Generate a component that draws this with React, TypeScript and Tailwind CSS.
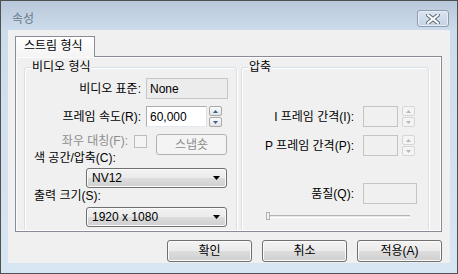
import React from "react";

const font = "font-['Liberation_Sans','Noto_Sans_CJK_KR',sans-serif]";

const btnBg =
  "bg-[linear-gradient(#f2f2f2,#ebebeb_50%,#dddddd_50%,#cfcfcf)] border border-[#707070] rounded-[3px] shadow-[inset_0_0_0_1px_#fbfbfb]";

const Arrow = ({ up, color }: { up?: boolean; color: string }) => (
  <svg width="5" height="3" viewBox="0 0 5 3">
    <path d={up ? "M2.5 0L5 3H0Z" : "M0 0H5L2.5 3Z"} fill={color} />
  </svg>
);

const Spinner = ({ disabled }: { disabled?: boolean }) => {
  const box = disabled
    ? "border-[#d6d6d6] bg-[#f4f4f4]"
    : "border-[#a9a9a9] bg-[linear-gradient(#fafafa,#e4e4e4)]";
  const c = disabled ? "#b8b8b8" : "#3b5d96";
  return (
    <div className="flex flex-col gap-[1px]">
      <div className={`w-[13px] h-[10px] border rounded-[2px] flex items-center justify-center ${box}`}>
        <Arrow up color={c} />
      </div>
      <div className={`w-[13px] h-[10px] border rounded-[2px] flex items-center justify-center ${box}`}>
        <Arrow color={c} />
      </div>
    </div>
  );
};

const Combo = ({ text }: { text: string }) => (
  <div className={`w-[141px] h-[20px] flex items-center pl-[5px] pr-[6px] ${btnBg}`}>
    <span className="flex-1 leading-[14px]">{text}</span>
    <svg width="7" height="4" viewBox="0 0 7 4">
      <path d="M0 0H7L3.5 4Z" fill="#000" />
    </svg>
  </div>
);

const Button = ({ label }: { label: string }) => (
  <div className={`w-[85px] h-[22px] flex items-center justify-center leading-[14px] ${btnBg}`}>
    {label}
  </div>
);

const GroupBox = ({
  title,
  className,
  children,
}: {
  title: string;
  className: string;
  children: React.ReactNode;
}) => (
  <div
    className={`relative h-[190px] border border-[#d5dfe5] rounded-[3px] shadow-[inset_1px_1px_0_#ffffff,1px_1px_0_#ffffff] ${className}`}
  >
    <span className="absolute left-[6px] -top-[8px] px-[1px] bg-[#f0f0f0] leading-[14px]">
      {title}
    </span>
    {children}
  </div>
);

const Field = ({ w, children, disabled, readOnly }: { w: string; children?: React.ReactNode; disabled?: boolean; readOnly?: boolean }) => (
  <div
    className={`${w} h-[21px] border flex items-center pl-[3px] leading-[14px] ${
      disabled
        ? "bg-[#f0f0f0] border-[#c4c4c4]"
        : readOnly
        ? "bg-[#ececec] border-[#c6c6c6]"
        : "bg-white border-[#abadb3] border-b-[#e3e9ef] border-r-[#dbdfe6]"
    }`}
  >
    {children}
  </div>
);

export default function App() {
  return (
    <div
      className={`w-[458px] h-[274px] border border-[#505050] bg-[linear-gradient(#b8c8da,#cddcec_30px,#d8e5f2)] flex flex-col text-[12px] text-black ${font}`}
    >
      {/* title bar */}
      <div className="h-[29px] flex items-start">
        <span className="ml-[11px] mt-[11px] leading-[14px] text-[#6a7a8c]">속성</span>
        <div className="ml-auto mr-[8px] mt-[9px] w-[32px] h-[17px] rounded-[3px] border border-[#8d9cae] bg-[linear-gradient(#d9e4f0,#c4d3e4)] shadow-[inset_0_0_0_1px_#e8eef6] flex items-center justify-center">
          <svg width="14" height="10" viewBox="0 0 14 10">
            <path d="M2 1L12 9M12 1L2 9" stroke="#5f6b78" strokeWidth="4" strokeLinecap="square" />
            <path d="M2 1L12 9M12 1L2 9" stroke="#ffffff" strokeWidth="2" strokeLinecap="square" />
          </svg>
        </div>
      </div>

      {/* client area */}
      <div className="mx-[7px] h-[233px] bg-[#f0f0f0] flex flex-col">
        <div className="mt-[6px] ml-[7px] relative z-10 w-[80px] h-[21px] border border-b-0 border-[#898c95] bg-[linear-gradient(#ffffff,#f4f4f4)] pl-[8px] pt-[2px] leading-[14px]">
          스트림 형식
        </div>
        <div className="-mt-[1px] ml-[7px] w-[427px] h-[176px] border border-[#898c95] bg-[#f0f0f0]">
          <div className="h-full border border-[#fdfdfd] overflow-hidden flex gap-[4px] pl-[7px] pt-[9px]">
            <GroupBox title="비디오 형식" className="w-[213px]">
              <div className="flex flex-col pt-[10px]">
                <div className="flex items-center">
                  <span className="w-[116px] text-right leading-[14px]">비디오 표준:</span>
                  <div className="ml-[5px]">
                    <Field w="w-[82px]" readOnly>None</Field>
                  </div>
                </div>
                <div className="flex items-center mt-[7px]">
                  <span className="w-[116px] text-right leading-[14px]">프레임 속도(R):</span>
                  <div className="ml-[5px]">
                    <Field w="w-[61px]">60,000</Field>
                  </div>
                  <div className="ml-[2px]">
                    <Spinner />
                  </div>
                </div>
                <div className="flex items-start mt-[7px]">
                  <span className="w-[103px] text-right leading-[14px] text-[#8d8d8d]">좌우 대칭(F):</span>
                  <div className="ml-[6px] mt-[1px] w-[13px] h-[13px] border border-[#bcbcbc] bg-[#f4f4f4]" />
                  <div className="ml-[9px] w-[71px] h-[21px] rounded-[3px] border border-[#adb2b5] bg-[#f4f4f4] flex items-center justify-center text-[#8d8d8d] leading-[14px]">
                    스냅숏
                  </div>
                </div>
                <span className="-mt-[4px] ml-[9px] leading-[14px]">색 공간/압축(C):</span>
                <div className="mt-[3px] ml-[61px]">
                  <Combo text="NV12" />
                </div>
                <span className="mt-[1px] ml-[9px] leading-[14px]">출력 크기(S):</span>
                <div className="mt-[4px] ml-[61px]">
                  <Combo text="1920 x 1080" />
                </div>
              </div>
            </GroupBox>
            <GroupBox title="압축" className="w-[188px]">
              <div className="flex flex-col pt-[38px]">
                <div className="flex items-center">
                  <span className="w-[112px] text-right leading-[14px]">I 프레임 간격(I):</span>
                  <div className="ml-[9px]">
                    <Field w="w-[35px]" disabled />
                  </div>
                  <div className="ml-[4px]">
                    <Spinner disabled />
                  </div>
                </div>
                <div className="flex items-center mt-[8px]">
                  <span className="w-[112px] text-right leading-[14px]">P 프레임 간격(P):</span>
                  <div className="ml-[9px]">
                    <Field w="w-[35px]" disabled />
                  </div>
                  <div className="ml-[4px]">
                    <Spinner disabled />
                  </div>
                </div>
                <div className="flex items-center mt-[27px]">
                  <span className="w-[112px] text-right leading-[14px]">품질(Q):</span>
                  <div className="ml-[9px]">
                    <Field w="w-[54px]" disabled />
                  </div>
                </div>
                <div className="mt-[8px] ml-[24px] w-[144px] h-[8px] flex items-center relative">
                  <div className="w-full h-[3px] border-t border-[#b4b4b4] bg-[#e6e6e6] border-b border-b-white" />
                  <div className="absolute left-0 top-0 w-[4px] h-[8px] border border-[#b0b0b0] bg-[#f4f4f4]" />
                </div>
              </div>
            </GroupBox>
          </div>
        </div>
        <div className="mt-[8px] mr-[8px] flex justify-end gap-[10px]">
          <Button label="확인" />
          <Button label="취소" />
          <Button label="적용(A)" />
        </div>
      </div>
    </div>
  );
}
